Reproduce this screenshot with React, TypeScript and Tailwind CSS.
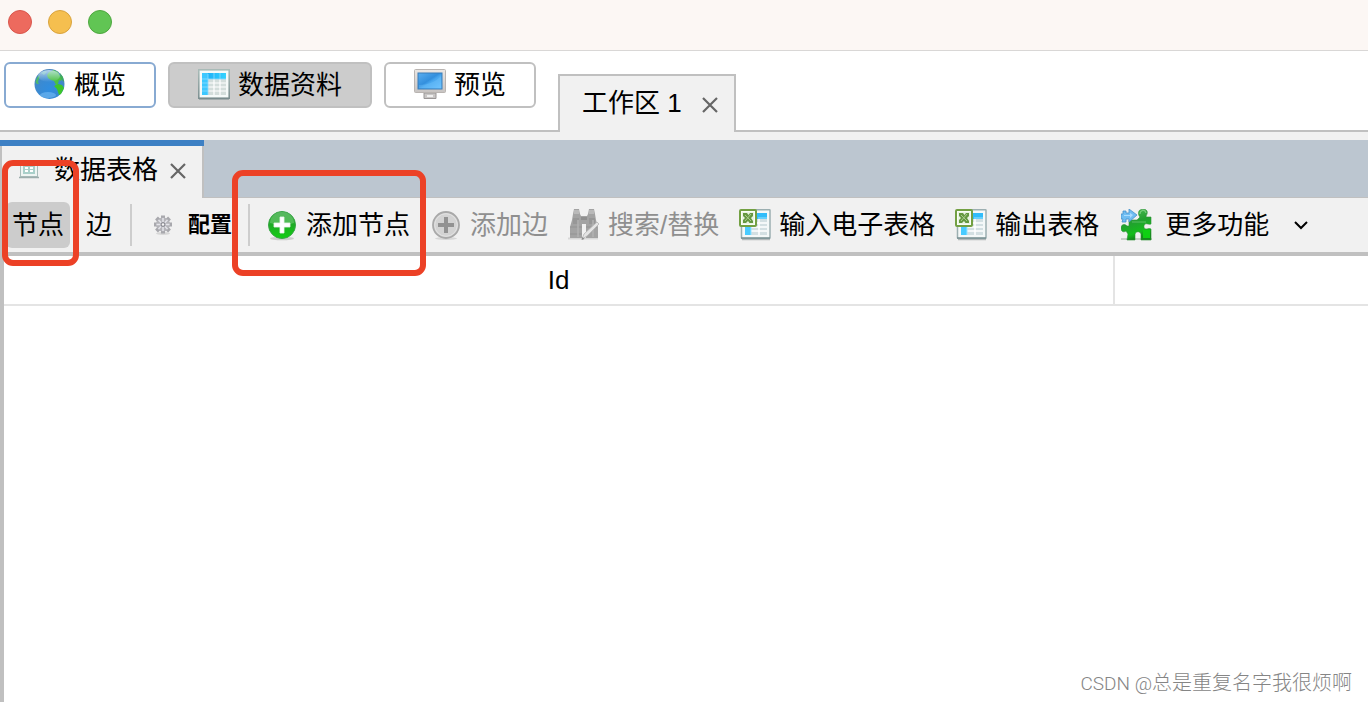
import type { ReactNode } from 'react';

function Globe() {
  return (
    <svg className="size-8 shrink-0" viewBox="0 0 32 32" aria-hidden="true">
      <defs>
        <radialGradient id="sea" cx="50%" cy="68%" r="62%">
          <stop offset="0" stopColor="#2f8de0" />
          <stop offset="0.6" stopColor="#3a8ad2" />
          <stop offset="1" stopColor="#4b86bd" />
        </radialGradient>
        <linearGradient id="shine" x1="0" y1="0" x2="0" y2="1">
          <stop offset="0" stopColor="#d6ecff" stopOpacity="0.75" />
          <stop offset="1" stopColor="#d6ecff" stopOpacity="0" />
        </linearGradient>
      </defs>
      <circle cx="15.500" cy="15" r="15" fill="url(#sea)" />
      <path d="M2 11l1.500-3 2.500-2-1 4-1 3 1 2-2 0-1.500-2z" fill="#4db96e" />
      <path d="M15 3l5-2 4 2 2 4 2 2-1 3-2-1-1 4-2 1-2-4-3-1-3-2-1-3z" fill="#4cc043" />
      <path d="M20 17l4-2 4 1 2 3-3 6-2 1-1-3-1-3z" fill="#3dc52c" />
      <path d="M7 4l4-2 2 1-3 3z" fill="#6cbfae" opacity="0.8" />
      <path d="M26 4l3 4 1 5-3-3z" fill="#3fae58" />
      <ellipse cx="15" cy="7" rx="11" ry="6" fill="url(#shine)" />
      <ellipse cx="14" cy="26" rx="8" ry="3" fill="#8acbff" opacity="0.45" />
    </svg>
  );
}

function Sheet() {
  return (
    <svg className="size-8 shrink-0" viewBox="0 0 32 32" aria-hidden="true">
      <defs>
        <linearGradient id="sheetEdge" x1="0" y1="0" x2="0" y2="1">
          <stop offset="0" stopColor="#a9bbb8" />
          <stop offset="1" stopColor="#7d9091" />
        </linearGradient>
        <linearGradient id="sheetHead" x1="0" y1="0" x2="1" y2="0">
          <stop offset="0" stopColor="#18a8f5" />
          <stop offset="1" stopColor="#35d2ff" />
        </linearGradient>
      </defs>
      <rect x="0.800" y="0.800" width="30.400" height="28.400" fill="#f5faf9" stroke="url(#sheetEdge)" strokeWidth="1.600" />
      <path d="M1 30h30" stroke="#78898b" />
      <rect x="4" y="4" width="24" height="22" fill="#d3dddb" />
      <rect x="4" y="4" width="24" height="6" fill="url(#sheetHead)" />
      <rect x="4" y="4" width="6" height="22" fill="#3dc8ff" />
      <path d="M10 14h18M10 18h18M10 22h18M16 10v16M22 10v16" stroke="#fff" strokeWidth="1.200" />
      <path d="M10 5v21M4 10h24M4 14h6M4 18h6M4 22h6M16 4v6M22 4v6" stroke="#8fdcff" strokeWidth="0.800" />
    </svg>
  );
}

function Monitor() {
  return (
    <svg className="size-8 shrink-0" viewBox="0 0 32 32" aria-hidden="true">
      <defs>
        <linearGradient id="screen" x1="0" y1="0" x2="1" y2="1">
          <stop offset="0" stopColor="#5aaef0" />
          <stop offset="0.45" stopColor="#338fdd" />
          <stop offset="0.55" stopColor="#49a7ee" />
          <stop offset="1" stopColor="#6bc3ff" />
        </linearGradient>
        <linearGradient id="caseFill" x1="0" y1="0" x2="0" y2="1">
          <stop offset="0" stopColor="#ebe7e4" />
          <stop offset="1" stopColor="#c7c3c1" />
        </linearGradient>
      </defs>
      <path d="M10 24h12v5.500H10z" fill="#c9c6c5" stroke="#9a9797" />
      <path d="M13 26h6v2h-6z" fill="#efefef" />
      <rect x="0.500" y="0.500" width="31" height="23" rx="1" fill="url(#caseFill)" stroke="#b9b4b1" />
      <rect x="4" y="4" width="24" height="16" fill="url(#screen)" stroke="#3b7cb8" />
      <path d="M5 16c8 0 17-3 22-9v12H5z" fill="#7fcbff" opacity="0.3" />
    </svg>
  );
}

function SmallSheet() {
  return (
    <svg className="size-5 shrink-0" viewBox="0 0 20 20" aria-hidden="true">
      <rect x="1.500" y="0.500" width="17" height="16" fill="#eff5f3" stroke="#a9bdba" />
      <path d="M0 17.500h20" stroke="#9cadac" strokeWidth="1.500" />
      <rect x="4" y="4" width="12" height="10" fill="#a9cfc9" />
      <path d="M6 7h3v2H6zM11 7h3v2h-3zM6 10h3v2H6zM11 10h3v2h-3z" fill="#fff" />
    </svg>
  );
}

function Gear() {
  return (
    <svg className="size-5 shrink-0" viewBox="0 0 20 20" aria-hidden="true">
      <ellipse cx="10" cy="18.500" rx="7" ry="1.500" fill="#ccc" opacity="0.7" />
      <g stroke="#a8a8ad" strokeWidth="4">
        <path d="M10 0.500v18M1 9.500h18M3.500 3l13 13M16.500 3l-13 13" />
      </g>
      <circle cx="10" cy="9.500" r="7" fill="#b4b4b9" />
      <path d="M10 3v13M3.500 9.500h13M5.500 5l9 9M14.500 5l-9 9" stroke="#e4e4ea" strokeWidth="1.500" />
      <circle cx="10" cy="9.500" r="2.500" fill="#8d8d95" />
      <circle cx="10" cy="9.500" r="1.200" fill="#f5f5f5" />
    </svg>
  );
}

function AddGreen() {
  return (
    <svg className="size-8 shrink-0" viewBox="0 0 32 32" aria-hidden="true">
      <defs>
        <linearGradient id="greenBall" x1="0" y1="0" x2="0" y2="1">
          <stop offset="0" stopColor="#2fa23c" />
          <stop offset="0.5" stopColor="#1eac24" />
          <stop offset="1" stopColor="#12cf12" />
        </linearGradient>
      </defs>
      <ellipse cx="16" cy="29.500" rx="12" ry="1.800" fill="#bdbdbd" opacity="0.7" />
      <circle cx="16" cy="16" r="13.500" fill="url(#greenBall)" stroke="#39a546" />
      <path d="M4 14a12 11 0 0 1 24 0q-12 4-24 0z" fill="#a5e0a5" opacity="0.35" />
      <path d="M14 8h4v6h6v4h-6v6h-4v-6H8v-4h6z" fill="#fff" stroke="#e8f4e8" strokeWidth="0.800" />
    </svg>
  );
}

function AddGrey() {
  return (
    <svg className="size-8 shrink-0" viewBox="0 0 32 32" aria-hidden="true">
      <ellipse cx="16" cy="29.500" rx="11" ry="1.500" fill="#d7d7d7" />
      <circle cx="16" cy="16" r="13" fill="#d3d3d3" stroke="#a9a9a9" strokeWidth="1.800" />
      <circle cx="16" cy="16" r="11.300" fill="none" stroke="#e2e2e2" />
      <path d="M14 8h4v6h6v4h-6v6h-4v-6H8v-4h6z" fill="#929292" />
    </svg>
  );
}

function Binoculars() {
  return (
    <svg className="size-8 shrink-0" viewBox="0 0 32 32" aria-hidden="true">
      <path d="M0 29.500h30" stroke="#d8d8d8" strokeWidth="2" />
      <path d="M6 0h5l1 5 1 2h6l1-2 1-5h5l1 5 1 6 2 7v11H18V15h-4v14H2V18l2-7 1-6z" fill="#a3a3a3" />
      <path d="M6 1h5v4H6zM21 1h5v4h-5z" fill="#b9b9b9" />
      <path d="M5 9h6v6H5zM21 9h6v6h-6z" fill="#979797" />
      <path d="M13 8h6v3h-6z" fill="#8f8f8f" />
      <path d="M2 18h12M18 18h11M2 25h12" stroke="#939393" />
      <path d="M10 11v17M25 11v17" stroke="#b2b2b2" strokeWidth="1.500" />
      <path d="M14 30l2-5L29 13l2 2-12 12z" fill="#e4e4e4" stroke="#b5b5b5" strokeWidth="0.800" />
      <path d="M13.500 31l1-3 2 2z" fill="#8a8a8a" />
    </svg>
  );
}

function Excel() {
  return (
    <svg className="size-8 shrink-0" viewBox="0 0 32 32" aria-hidden="true">
      <path d="M3 30.500h28" stroke="#b4b9ba" strokeWidth="1.500" />
      <rect x="2.500" y="0.800" width="28.500" height="28.400" rx="0.500" fill="#f4f8f8" stroke="#9cafb1" strokeWidth="1.500" />
      <path d="M2 29h29" stroke="#72898d" strokeWidth="1.200" />
      <rect x="6" y="4" width="22" height="22" fill="#d3dfe2" />
      <rect x="16" y="4" width="12" height="6" fill="#31bcfa" />
      <rect x="6" y="17" width="6" height="9" fill="#49cbff" />
      <path d="M12 14h16M12 18h16M12 22h16M20 10v16" stroke="#fff" strokeWidth="1.500" />
      <path d="M12 17v9M19 9h9" stroke="#9be4ff" />
      <rect x="1" y="1" width="16" height="16" rx="1" fill="#fafef6" stroke="#73a043" strokeWidth="2" />
      <rect x="3" y="3" width="12" height="12" fill="#eaf4e2" />
      <path d="M4 4h4l1.500 2L11 4h3v3l-2 2 2 3v2h-3.500L9 12l-2 2H4v-3l2-2-2-2z" fill="#659840" />
      <path d="M6 6l6 6M12 5l-6 7" stroke="#a9cb8e" strokeWidth="1" />
    </svg>
  );
}

function Puzzle() {
  return (
    <svg className="size-8 shrink-0" viewBox="0 0 32 32" aria-hidden="true">
      <defs>
        <linearGradient id="piece" x1="0" y1="0" x2="0.300" y2="1">
          <stop offset="0" stopColor="#55c05c" />
          <stop offset="0.5" stopColor="#229f30" />
          <stop offset="0.85" stopColor="#14bd1b" />
          <stop offset="1" stopColor="#15891c" />
        </linearGradient>
      </defs>
      <path d="M0 30h31" stroke="#c7cdc7" strokeWidth="2" />
      <path
        d="M8 11h8l3-3c-2-2-2-6 0-7 3-1.500 6-1 7 1 1 3-1 4-1 6h5v7c-2 1-4-1-6 0-2 2-1 5 1 5s3-1 5 0v11H20v-6c-1-3-5-3-6 0v6H6l1-6-2-3c-3 2-5 0-5-3s3-5 6-2h2z"
        fill="url(#piece)"
        stroke="#2c9134"
        strokeWidth="0.600"
      />
      <path d="M19 5c0-4 5-5 6-1" fill="none" stroke="#8ddb90" strokeWidth="1.200" opacity="0.7" />
      <path d="M11 13h14" stroke="#7fd085" opacity="0.6" />
      <path d="M22 21h7v8h-7z" fill="#0fd013" />
      <path d="M2 2h3v2h3V0l8 6-8 7v-3H5v3H1l1-3H0V5h2z" fill="#6fbdf2" stroke="#4590cc" strokeWidth="0.800" />
      <path d="M3 6h6V4l3 2-3 3V7H3z" fill="#a9dcff" />
    </svg>
  );
}

function Cross() {
  return (
    <svg className="block size-4" viewBox="0 0 16 16" aria-hidden="true">
      <path d="M1 1l14 14M15 1L1 15" stroke="#666" strokeWidth="2.200" fill="none" />
    </svg>
  );
}

function Perspective({ icon, label, look }: { icon: ReactNode; label: string; look: string }) {
  return (
    <button type="button" className={`flex h-[46px] shrink-0 items-center gap-2 rounded-md border-2 px-7 ${look}`}>
      {icon}
      {label}
    </button>
  );
}

function Tool({ icon, label, disabled = false }: { icon: ReactNode; label: string; disabled?: boolean }) {
  return (
    <button type="button" disabled={disabled} className="flex shrink-0 items-center gap-2 disabled:text-[#8f8f8f]">
      {icon}
      {label}
    </button>
  );
}

function Divider() {
  return <div className="h-[42px] w-0.5 shrink-0 bg-[#cdcdcd]" />;
}

export default function App() {
  return (
    <div className="relative flex min-h-screen flex-col overflow-hidden bg-white font-['Liberation_Sans','Noto_Sans_CJK_SC',sans-serif] text-[26px] leading-8 whitespace-nowrap text-black">
      <header className="flex h-[51px] items-start gap-4 border-b border-[#d9d7d6] bg-[#fcf7f4] px-2 pt-2.5">
        <button type="button" aria-label="关闭" className="size-6 rounded-full border border-[#d9564c] bg-[#ed6a5e]" />
        <button type="button" aria-label="最小化" className="size-6 rounded-full border border-[#d9a33d] bg-[#f5bf4f]" />
        <button type="button" aria-label="缩放" className="size-6 rounded-full border border-[#4ea73f] bg-[#61c554]" />
      </header>

      <nav className="flex h-[81px] items-end border-b-2 border-[#c0c0c0] pl-1">
        <div className="flex gap-3 self-start pt-[11px]">
          <Perspective icon={<Globe />} label="概览" look="border-[#88aad2] bg-white" />
          <Perspective icon={<Sheet />} label="数据资料" look="border-[#c0c0c0] bg-[#cccccc]" />
          <Perspective icon={<Monitor />} label="预览" look="border-[#c0c0c0] bg-white" />
        </div>
        <div className="-mb-0.5 ml-[22px] flex h-[58px] shrink-0 items-center gap-5 border-2 border-b-0 border-[#c0c0c0] bg-[#f1f1f1] pr-4 pb-0.5 pl-[22px]">
          <span>工作区 1</span>
          <button type="button" aria-label="关闭工作区" className="pt-1">
            <Cross />
          </button>
        </div>
      </nav>

      <div className="h-2 bg-[#f1f1f1]" />

      <div className="flex h-[58px] border-b border-[#c0c0c0] bg-[#bcc6d0]">
        <div className="-mb-px flex w-[204px] shrink-0 flex-col border-t-[6px] border-[#3d80c4] bg-[#f1f1f1]">
          <div className="flex grow items-center border-x-2 border-[#c0c0c0] pb-1 pl-[17px]">
            <SmallSheet />
            <span className="ml-[15px]">数据表格</span>
            <button type="button" aria-label="关闭数据表格" className="ml-3 pt-0.5">
              <Cross />
            </button>
          </div>
        </div>
      </div>

      <div className="flex h-[58px] items-center border-b-4 border-l-2 border-[#c0c0c0] bg-[#f1f1f1] pl-1">
        <div className="mr-[18px] flex shrink-0 items-center gap-4">
          <button type="button" aria-pressed="true" className="h-[46px] w-16 rounded-md bg-[#cccccc]">
            节点
          </button>
          <button type="button" aria-pressed="false">
            边
          </button>
        </div>
        <Divider />
        <button type="button" className="mr-4 ml-[21px] flex shrink-0 items-center gap-[15px] text-[22px] font-bold">
          <Gear />
          配置
        </button>
        <Divider />
        <div className="ml-4 flex items-center gap-5">
          <Tool icon={<AddGreen />} label="添加节点" />
          <Tool icon={<AddGrey />} label="添加边" disabled />
          <Tool icon={<Binoculars />} label="搜索/替换" disabled />
          <Tool icon={<Excel />} label="输入电子表格" />
          <Tool icon={<Excel />} label="输出表格" />
          <button type="button" aria-haspopup="menu" className="ml-0.5 flex shrink-0 items-center gap-3">
            <Puzzle />
            更多功能
            <svg className="ml-3 h-4 w-4" viewBox="0 0 16 16" aria-hidden="true">
              <path d="M2 5l6 6 6-6" fill="none" stroke="#000" strokeWidth="2" />
            </svg>
          </button>
        </div>
      </div>

      <main className="grow border-l-4 border-[#c0c0c0]">
        <table className="w-full table-fixed border-collapse">
          <thead>
            <tr className="h-[49px] border-b-2 border-[#e4e4e4]">
              <th scope="col" className="w-[81.4%] border-r-2 border-[#e4e4e4] p-0 font-normal">
                Id
              </th>
              <th scope="col" aria-label="标签" className="p-0" />
            </tr>
          </thead>
          <tbody />
        </table>
      </main>

      <div className="pointer-events-none absolute top-40 left-0.5 h-[106px] w-[77px] rounded-[11px] border-[6px] border-[#ec4126]" />
      <div className="pointer-events-none absolute top-[170px] left-[232px] h-[106px] w-[194px] rounded-[11px] border-[6px] border-[#ec4126]" />

      <p className="absolute right-4 bottom-1 font-['Roboto','Noto_Sans_CJK_SC',sans-serif] text-xl font-light text-[#858585]">
        <span className="text-[19px]">CSDN @</span>总是重复名字我很烦啊
      </p>
    </div>
  );
}
